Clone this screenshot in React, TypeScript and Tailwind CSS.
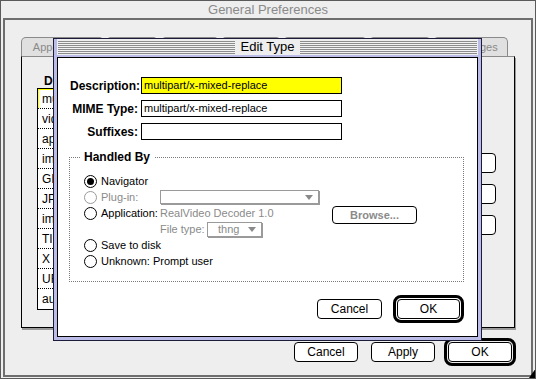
import React from "react";

function Radio({ checked = false, disabled = false }: { checked?: boolean; disabled?: boolean }) {
  return (
    <span
      className={`flex w-[13px] h-[13px] shrink-0 items-center justify-center rounded-full border bg-white ${
        disabled ? "border-[#9a9a9a]" : "border-black"
      }`}
    >
      {checked && <span className="block w-[7px] h-[7px] rounded-full bg-black" />}
    </span>
  );
}

function Arrow({ color = "#8a8a8a" }: { color?: string }) {
  return (
    <svg width="8" height="5" viewBox="0 0 8 5" className="shrink-0">
      <polygon points="0,0 8,0 4,5" fill={color} />
    </svg>
  );
}

function Stripes() {
  return (
    <div className="flex-1 h-[13px] bg-[image:repeating-linear-gradient(to_bottom,#8c8c8c_0px,#8c8c8c_1px,#f2f2f2_1px,#f2f2f2_2px)]" />
  );
}

const tabs: { label: string; w: string; ml: string }[] = [
  { label: "Appearance", w: "w-[83px]", ml: "ml-0" },
  { label: "Fonts", w: "w-[52px]", ml: "ml-[2px]" },
  { label: "Colors", w: "w-[58px]", ml: "ml-[3px]" },
  { label: "Images", w: "w-[60px]", ml: "ml-[2px]" },
  { label: "Applications", w: "w-[84px]", ml: "ml-[2px]" },
  { label: "Helpers", w: "w-[62px]", ml: "ml-[2px]" },
  { label: "Languages", w: "w-[75px]", ml: "ml-[2px]" },
];

const listRows = [
  "multipart/x-mixed-replace",
  "video/quicktime",
  "application/x-stuffit",
  "image/x-xbitmap",
  "GIF Image",
  "JPEG Image",
  "image/pict",
  "TIFF Image",
  "X Bitmap",
  "URL",
  "audio/basic",
];

export default function App() {
  return (
    <div className="relative w-[536px] h-[379px] overflow-hidden border border-[#5a5a5a] bg-[#eeeeee] font-['Liberation_Sans',Arial,sans-serif] text-black">
      {/* background window title */}
      <div className="h-[17px] text-center text-[13px] leading-[17px] text-[#8a8a8a]">General Preferences</div>

      {/* inner frame */}
      <div className="ml-[2px] flex h-[359px] w-[530px] flex-col border-2 border-[#6e6e6e]">
        {/* tabs */}
        <div className="mt-[17px] ml-[16px] flex h-[19px]">
          {tabs.map((t) => (
            <div
              key={t.label}
              className={`${t.w} ${t.ml} flex h-[19px] items-center justify-center rounded-t-[5px] border border-b-0 border-[#8a8a8a] bg-[#e0e0e0] text-[11px] text-[#8a8a8a]`}
            >
              {t.label}
            </div>
          ))}
        </div>

        {/* tab panel */}
        <div className="ml-[16px] flex h-[272px] w-[494px] items-start border border-black border-t-[#8a8a8a] bg-[#eeeeee] pl-[15px] shadow-[1px_2px_0_#9a9a9a]">
          <div className="flex flex-col pt-[17px]">
            <div className="h-[14px] pl-[7px] text-[12px] font-bold leading-[14px]">Description</div>
            <div className="w-[379px] border border-black bg-white">
              {listRows.map((r, i) => (
                <div
                  key={i}
                  className={`flex h-[20px] items-center pl-[4px] text-[12px] ${
                    i < listRows.length - 1 ? "border-b border-dotted border-black" : ""
                  } ${i === 0 ? "shadow-[inset_1px_1px_0_#ffff00]" : ""}`}
                >
                  {r}
                </div>
              ))}
            </div>
          </div>
          <div className="ml-[4px] flex flex-col gap-[11px] pt-[96px]">
            {["Edit...", "New...", "Delete"].map((b) => (
              <div
                key={b}
                className="flex h-[20px] w-[76px] items-center justify-center rounded-[4px] border border-black bg-white text-[12px]"
              >
                {b}
              </div>
            ))}
          </div>
        </div>

        {/* bottom buttons */}
        <div className="mt-[10px] flex h-[28px] items-center justify-end pr-[15px]">
          <div className="flex h-[20px] w-[64px] items-center justify-center rounded-[4px] border border-black bg-white text-[12px]">Cancel</div>
          <div className="ml-[13px] flex h-[20px] w-[64px] items-center justify-center rounded-[4px] border border-black bg-white text-[12px]">Apply</div>
          <div className="ml-[9px] h-[28px] w-[72px] rounded-[8px] border-[3px] border-black p-[1px]">
            <div className="flex h-[20px] w-full items-center justify-center rounded-[4px] border border-black bg-white text-[12px]">OK</div>
          </div>
        </div>
      </div>

      {/* grow corner mark */}
      <svg width="8" height="10" viewBox="0 0 8 10" className="absolute left-[528px] top-[367px]">
        <polygon points="7,0 7,10 0,10" fill="#000" />
      </svg>

      {/* Edit Type dialog */}
      <div className="absolute left-[52px] top-[37px] flex w-[429px] flex-col border border-[#1c1c3a] bg-[#bcbce8] px-[3px] pb-[3px]">
        <div className="flex h-[16px] items-start bg-[#eeeeee] px-[1px] pt-[2px]">
          <Stripes />
          <div className="-mt-[2px] px-[6px] text-[13px] leading-[16px]">Edit Type</div>
          <Stripes />
        </div>
        <div className="h-[2px]" />
        <div className="flex flex-col border border-black bg-white">
          {/* fields */}
          <div className="flex flex-col gap-[6px] pl-[12px] pt-[19px]">
            {[
              { label: "Description:", value: "multipart/x-mixed-replace", bg: "bg-[#ffff00]" },
              { label: "MIME Type:", value: "multipart/x-mixed-replace", bg: "bg-white" },
              { label: "Suffixes:", value: "", bg: "bg-white" },
            ].map((r) => (
              <div key={r.label} className="flex h-[17px] items-center gap-[3px]">
                <div className="w-[68px] whitespace-nowrap text-right text-[12px] font-bold">{r.label}</div>
                <div className={`h-[17px] w-[201px] border border-black ${r.bg} px-[2px] text-[11px] leading-[15px]`}>{r.value}</div>
              </div>
            ))}
          </div>

          {/* Handled By group */}
          <div className="relative ml-[11px] mt-[17px] h-[125px] w-[395px] border border-dotted border-[#7a7a7a] pl-[14px] pt-[15px]">
            <div className="absolute left-[10px] -top-[8px] bg-white px-[4px] text-[12px] font-bold leading-[14px]">Handled By</div>

            <div className="flex h-[16px] items-center">
              <Radio checked />
              <span className="ml-[4px] text-[11px]">Navigator</span>
            </div>

            <div className="flex h-[16px] items-center">
              <Radio disabled />
              <span className="ml-[4px] w-[59px] text-[11px] text-[#8a8a8a]">Plug-in:</span>
              <div className="flex h-[14px] w-[159px] items-center justify-end border border-[#9a9a9a] bg-white pr-[5px] shadow-[1px_1px_0_#9a9a9a]">
                <Arrow />
              </div>
            </div>

            <div className="flex h-[16px] items-start">
              <div className="flex h-[16px] items-center">
                <Radio />
                <span className="ml-[4px] w-[59px] text-[11px]">Application:</span>
                <span className="w-[172px] whitespace-nowrap text-[11px] text-[#8a8a8a]">RealVideo Decoder 1.0</span>
              </div>
              <div className="mt-[1px] flex h-[18px] w-[85px] shrink-0 items-center justify-center rounded-[4px] border border-black bg-white text-[11px] font-bold text-[#8a8a8a]">
                Browse...
              </div>
            </div>

            <div className="flex h-[16px] items-center pl-[76px]">
              <span className="w-[47px] whitespace-nowrap text-[11px] text-[#8a8a8a]">File type:</span>
              <div className="flex h-[15px] w-[55px] items-center justify-between border border-[#9a9a9a] bg-white pl-[10px] pr-[5px] shadow-[1px_1px_0_#9a9a9a]">
                <span className="text-[11px] leading-[13px] text-[#8a8a8a]">thng</span>
                <Arrow />
              </div>
            </div>

            <div className="flex h-[16px] items-center">
              <Radio />
              <span className="ml-[4px] text-[11px]">Save to disk</span>
            </div>

            <div className="flex h-[16px] items-center">
              <Radio />
              <span className="ml-[4px] text-[11px]">Unknown: Prompt user</span>
            </div>
          </div>

          {/* dialog buttons */}
          <div className="mt-[13px] flex items-center justify-end gap-[11px] pb-[13px] pr-[13px]">
            <div className="flex h-[20px] w-[65px] items-center justify-center rounded-[4px] border border-black bg-white text-[12px]">Cancel</div>
            <div className="h-[28px] w-[71px] rounded-[8px] border-[3px] border-black p-[1px]">
              <div className="flex h-[20px] w-full items-center justify-center rounded-[4px] border border-black bg-white text-[12px]">OK</div>
            </div>
          </div>
        </div>
      </div>
    </div>
  );
}
